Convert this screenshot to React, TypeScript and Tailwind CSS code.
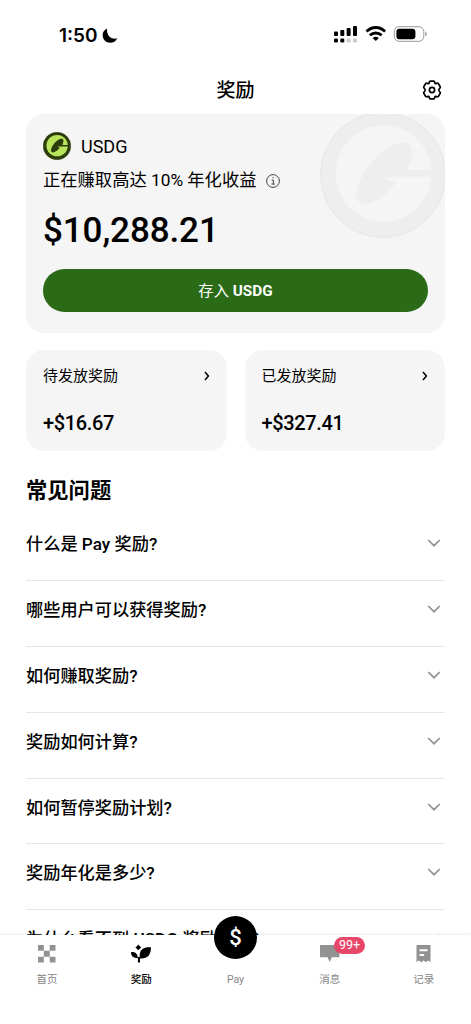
import type { ReactNode } from "react";

// ============================================================================
// DATA
// ============================================================================

const rewards = [
  { label: "待发放奖励", value: "+$16.67" },
  { label: "已发放奖励", value: "+$327.41" },
];

const questions = [
  "什么是 Pay 奖励?",
  "哪些用户可以获得奖励?",
  "如何赚取奖励?",
  "奖励如何计算?",
  "如何暂停奖励计划?",
  "奖励年化是多少?",
  "为什么看不到 USDG 奖励入口?",
];

// ============================================================================
// ICONS
// ============================================================================

function Coin({ className, rim, face, edge }: { className: string; rim: string; face: string; edge: string }) {
  return (
    <svg viewBox="0 0 126 126" className={className}>
      <circle cx="63" cy="63" r="62" fill={rim} stroke={edge} strokeWidth="2" />
      <circle cx="63.5" cy="61.5" r="48" fill={face} />
      <path
        d="M114 58H87C91 50 93 42 91.5 36C89 29 79 29 71 34C60 40 51 50 44 61C37 72 34 83 38 89C44 95 54 90 62 84.5C69 79.5 74 74 75.5 70C71 70 68 68.5 66.5 66.5C69 65 71 64.7 74 64.7H114Z"
        fill={rim}
      />
    </svg>
  );
}

function StatusIcons() {
  return (
    <svg width="96" height="20" viewBox="0 0 96 20">
      <g fill="#000">
        <rect x="1" y="6.5" width="4" height="4.5" rx="1" />
        <rect x="7.3" y="5" width="4" height="6" rx="1" />
        <rect x="13.6" y="3" width="4" height="8" rx="1" />
        <rect x="20" y="1" width="4" height="10" rx="1" />
        <rect x="1" y="13.5" width="4" height="4" rx="1.3" />
        <rect x="7.3" y="13.5" width="4" height="4" rx="1.3" />
      </g>
      <rect x="13.6" y="13.5" width="4" height="4" rx="1.3" fill="#ccc" />
      <rect x="20" y="13.5" width="4" height="4" rx="1.3" fill="#ccc" />
      <g fill="none" stroke="#000" strokeWidth="2.8">
        <path d="M33.5 6.4C39 1.2 46.6 1.2 52.1 6.4" />
        <path d="M36.9 10.3C40.3 7.2 45.3 7.2 48.7 10.3" />
      </g>
      <path d="M39.7 12.9C41.4 11.3 44.2 11.3 45.9 12.9L42.8 16Z" fill="#000" />
      <rect x="61.3" y="1.7" width="29.5" height="14.6" rx="4.8" fill="none" stroke="#999" />
      <rect x="63.4" y="3.8" width="19" height="10.4" rx="3" fill="#000" />
      <path d="M92.3 6.8C94.4 7.5 94.4 10.5 92.3 11.2Z" fill="#999" />
    </svg>
  );
}

function GearIcon() {
  return (
    <svg width="20" height="20" viewBox="0 0 20 20" fill="none" stroke="#000" strokeWidth="1.7" strokeLinejoin="round">
      <path d="M8.2 1.2H11.8Q12.4 1.2 12.6 2.1L12.9 3.1Q13.2 3.8 13.9 3.6L15.2 3.2Q16 3 16.4 3.6L18.2 6.7Q18.6 7.4 18 8L17.3 8.8Q16.4 10 17.3 11.2L18 12Q18.6 12.6 18.2 13.3L16.4 16.4Q16 17 15.2 16.8L13.9 16.4Q13.2 16.2 12.9 16.9L12.6 17.9Q12.4 18.8 11.8 18.8H8.2Q7.6 18.8 7.4 17.9L7.1 16.9Q6.8 16.2 6.1 16.4L4.8 16.8Q4 17 3.6 16.4L1.8 13.3Q1.4 12.6 2 12L2.7 11.2Q3.6 10 2.7 8.8L2 8Q1.4 7.4 1.8 6.7L3.6 3.6Q4 3 4.8 3.2L6.1 3.6Q6.8 3.8 7.1 3.1L7.4 2.1Q7.6 1.2 8.2 1.2Z" />
      <circle cx="10" cy="10" r="2.6" />
    </svg>
  );
}

function HomeIcon() {
  return (
    <svg width="18" height="18" viewBox="0 0 18 18" fill="#929292">
      <path d="M0 0h5.8v5.8H0zM11.7 0h5.8v5.8h-5.8zM5.8 5.8h5.9v5.9H5.8zM0 11.7h5.8v5.8H0zM11.7 11.7h5.8v5.8h-5.8z" />
    </svg>
  );
}

function RewardIcon() {
  return (
    <svg width="20" height="18" viewBox="0 0 20 18" fill="#000" className="overflow-visible">
      <path d="M7.2-.4L8.8 1.2 10.3 2.4 8.8 3.8 7.3 5.2 5.9 3.8 4.4 2.4 5.9 1.2Z" />
      <path d="M0 7.1C4.2 6.7 6.7 8.7 6.8 13.2C2.4 13.2.1 11.6 0 7.1Z" />
      <path d="M20 2.3C13 1.8 8.8 4 8.7 10.3V13.4C16.5 14 19.8 10.4 20 2.3Z" />
      <path d="M6.9 12H9V17.5H6.9Z" />
    </svg>
  );
}

function MessageIcon() {
  return (
    <svg width="20" height="18" viewBox="0 0 20 18" fill="#929292">
      <path d="M0 0h19.4v12.3h-7.5L9.7 17l-2.2-4.7H0z" />
    </svg>
  );
}

function RecordIcon() {
  return (
    <svg width="16" height="18" viewBox="0 0 16 18">
      <path d="M.5 0h14v17.2l-2.3-1.8-2.3 1.8-2.3-1.8-2.4 1.8-2.4-1.8L.5 17.2z" fill="#929292" />
      <path d="M3.5 4.2h8v2h-8zM3.5 8.9h4.7v2H3.5z" fill="#fff" />
    </svg>
  );
}

function Tab({ icon, label, active }: { icon?: ReactNode; label: string; active?: boolean }) {
  return (
    <div className="flex w-[94.2px] flex-col items-center">
      <div className="flex h-[27px] items-start">{icon}</div>
      <span className={`text-[10.5px] leading-4 ${active ? "font-medium text-black" : "text-[#858585]"}`}>
        {label}
      </span>
    </div>
  );
}

// ============================================================================
// APP
// ============================================================================

export default function App() {
  return (
    <div className="relative h-[1024px] w-[471px] overflow-hidden bg-white font-[Roboto,'Noto_Sans_CJK_SC',sans-serif] text-black">
      {/* STATUS BAR */}
      <div className="flex h-[70px] items-start justify-between pt-[25px] pr-[42px] pl-[59px]">
        <div className="flex items-center gap-1 pt-px">
          <span className="font-['Inter',sans-serif] text-[19px] leading-5 font-semibold">1:50</span>
          <svg width="16" height="16" viewBox="0 0 16 16">
            <path d="M5.2.5C.8 2.2-.6 7.2 1.7 11.2C4.5 16 12.6 16.3 15.3 10.3C9.8 12 3.9 7.4 5.2.5Z" fill="#000" />
          </svg>
        </div>
        <StatusIcons />
      </div>

      {/* HEADER */}
      <header className="grid h-11 grid-cols-[1fr_auto_1fr] items-start px-[29px]">
        <span />
        <h1 className="pt-[5px] text-[19px] leading-8 font-medium">奖励</h1>
        <div className="flex justify-end pt-[10px]">
          <GearIcon />
        </div>
      </header>

      <main className="px-[26px]">
        {/* BALANCE */}
        <section className="relative h-[219px] overflow-hidden rounded-[18px] bg-[#f5f5f5] px-[17px] pt-[18px]">
          <Coin className="absolute -top-[2px] left-[294px] size-[126px]" rim="#eeeeee" face="#f5f5f5" edge="#eaeaea" />
          <div className="relative flex h-7 items-center gap-[10px]">
            <Coin className="size-7" rim="#2c3d0c" face="#b9e55d" edge="#2c3d0c" />
            <span className="text-[18px]">USDG</span>
          </div>
          <div className="relative mt-[4px] flex h-[33px] items-center gap-[10px] text-[17.3px]">
            <span className="pt-px whitespace-nowrap">正在赚取高达 10% 年化收益</span>
            <svg width="14" height="14" viewBox="0 0 14 14" fill="none" stroke="#444">
              <circle cx="7" cy="7" r="6.4" />
              <path d="M5.7 6h1.6v4M5.4 10.1h3.5M6.5 3.7h1.2" />
            </svg>
          </div>
          <p className="relative mt-[9px] text-[35px] leading-[50px] font-medium tracking-[-0.1px]">$10,288.21</p>
          <button className="mt-[13px] flex h-[43px] w-[385px] items-center justify-center rounded-full bg-[#2b6b17] pt-px text-[15.3px] text-white">
            存入&nbsp;<b>USDG</b>
          </button>
        </section>

        {/* REWARDS */}
        <section className="mt-[17px] grid grid-cols-2 gap-[18px]">
          {rewards.map((r) => (
            <div key={r.label} className="h-[101px] rounded-[18px] bg-[#f5f5f5] px-[17px] pt-[14px]">
              <div className="flex h-6 items-center justify-between text-[15px]">
                <span className="pt-px">{r.label}</span>
                <svg width="6" height="10" viewBox="0 0 6 10" fill="none" stroke="#000" strokeWidth="1.5">
                  <path d="M1 1L4.4 5 1 9" />
                </svg>
              </div>
              <p className="mt-[20px] text-xl leading-[30px] font-medium tracking-[-0.35px]">{r.value}</p>
            </div>
          ))}
        </section>

        {/* FAQ */}
        <h2 className="mt-[24px] text-[21.3px] leading-8 font-bold">常见问题</h2>
        <ul className="mt-2">
          {questions.map((question) => (
            <li key={question} className="flex h-[65.9px] justify-between border-b border-[#e7e7e7] pt-[13px]">
              <span className="pt-px text-[17.2px] leading-[30px] font-medium">{question}</span>
              <svg width="14" height="8" viewBox="0 0 14 8" className="mt-[11px] mr-1" fill="none" stroke="#929292" strokeWidth="1.7">
                <path d="M1.2 1L7 6.7 12.8 1" />
              </svg>
            </li>
          ))}
        </ul>
      </main>

      {/* TAB BAR */}
      <nav className="absolute bottom-0 left-0 flex h-[89px] w-full bg-white pt-[10px] shadow-[0_-1px_3px_rgba(0,0,0,0.08)]">
        <Tab icon={<HomeIcon />} label="首页" />
        <Tab icon={<RewardIcon />} label="奖励" active />
        <Tab label="Pay" />
        <Tab icon={<MessageIcon />} label="消息" />
        <Tab icon={<RecordIcon />} label="记录" />
        <div className="absolute -top-[19px] left-[214px] flex size-[43px] items-center justify-center rounded-full bg-black text-[22px] font-medium text-white">
          $
        </div>
        <div className="absolute top-[2px] left-[334px] flex h-[17px] w-[31px] items-center justify-center rounded-full bg-[#e9476a] text-[12.5px] text-white">
          99+
        </div>
      </nav>
    </div>
  );
}
